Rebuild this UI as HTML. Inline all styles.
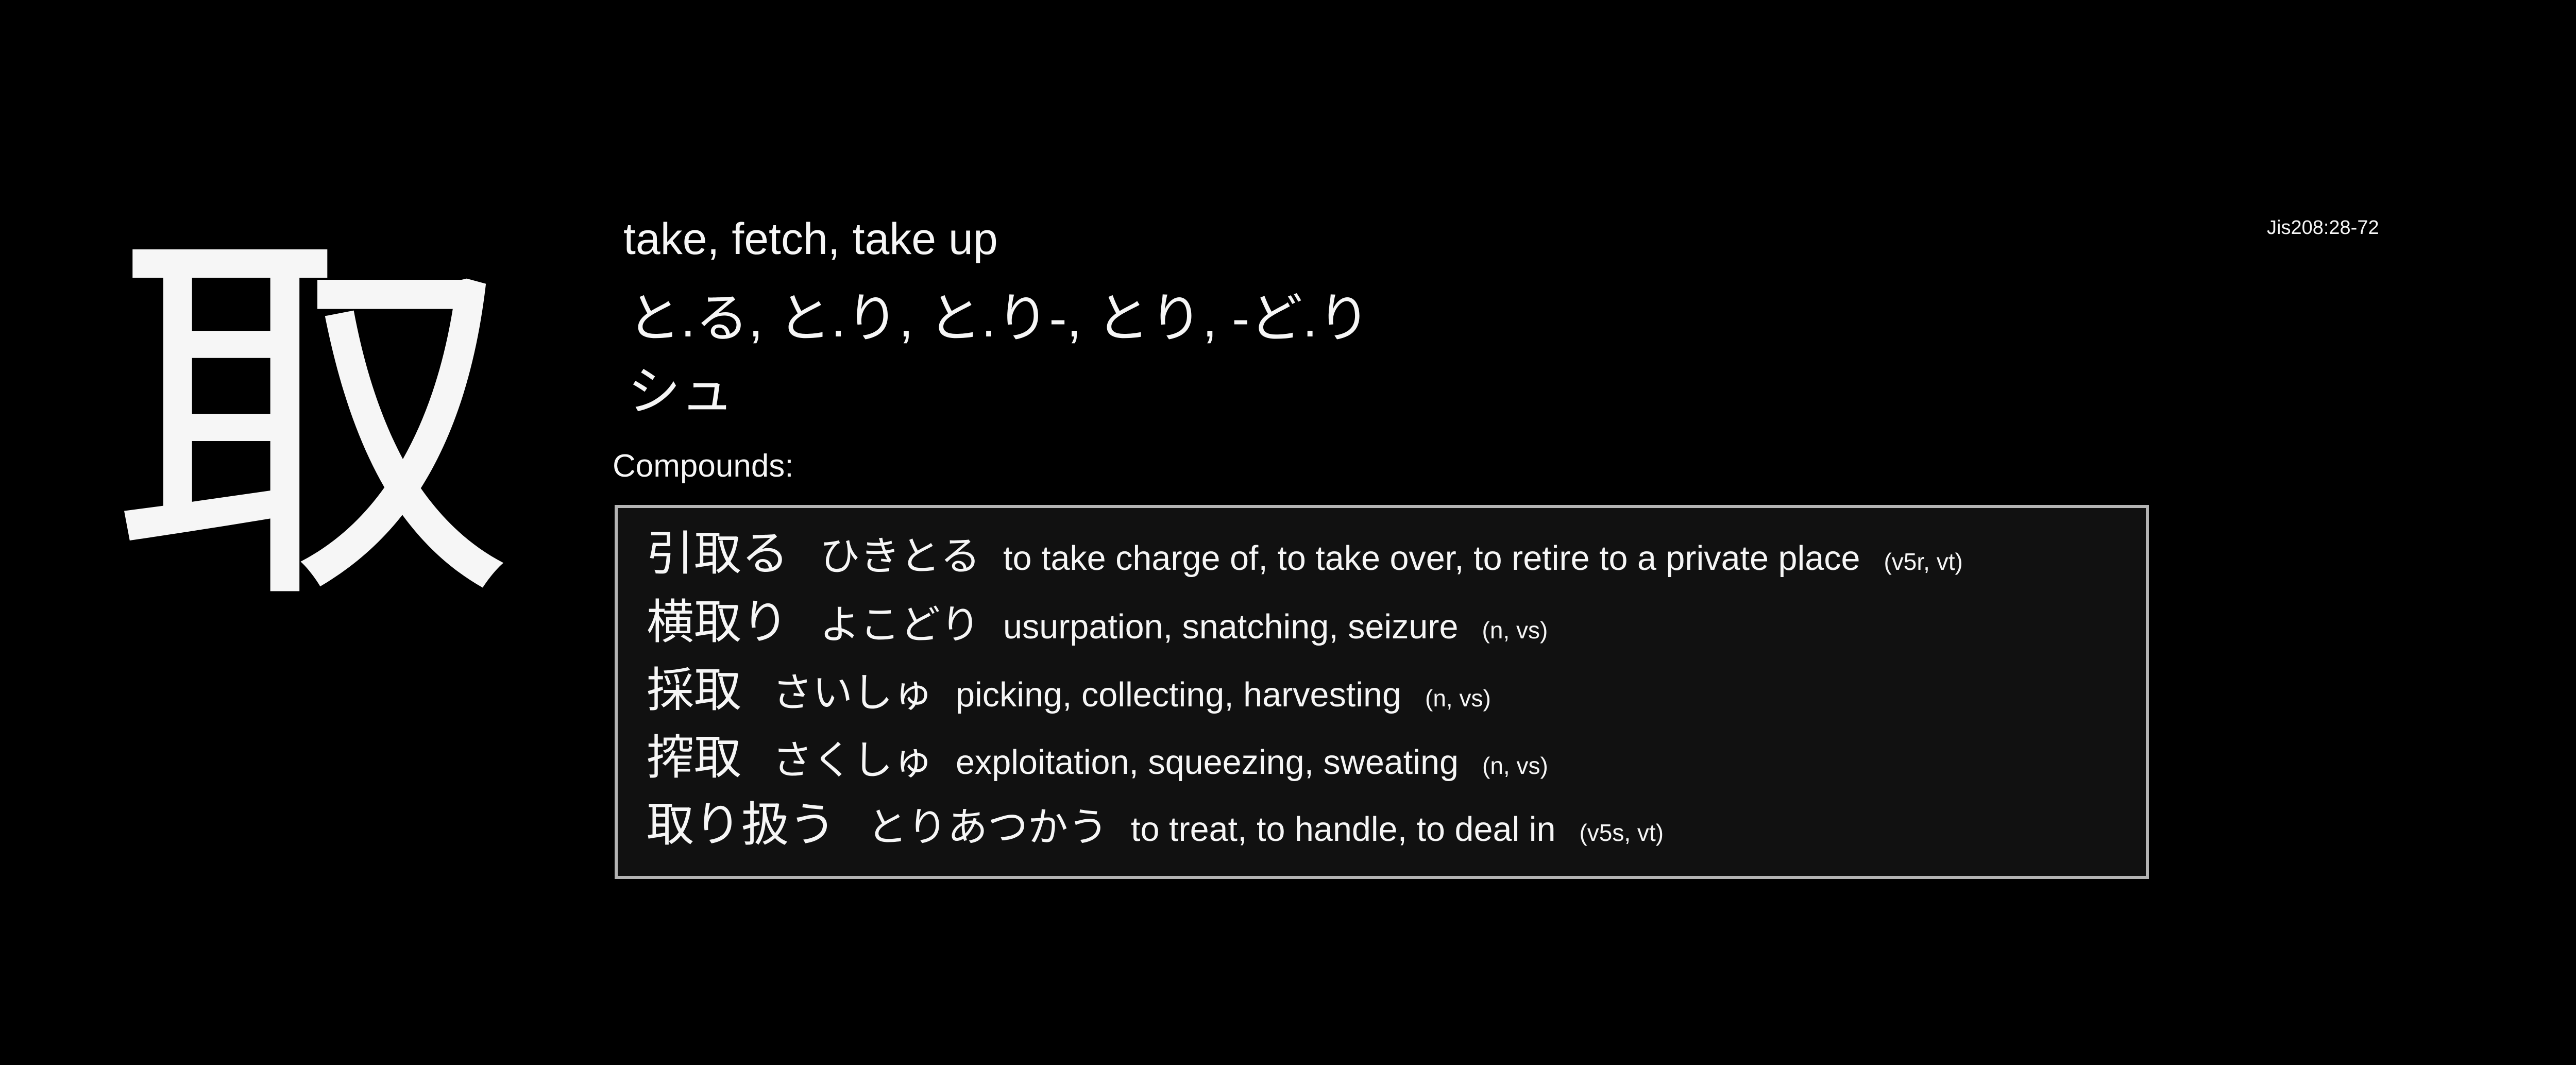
<!DOCTYPE html>
<html><head><meta charset="utf-8"><style>
html,body{margin:0;padding:0;background:#000;}
body{width:5008px;height:2067px;position:relative;overflow:hidden;color:#f6f6f6;font-family:"Liberation Sans","Noto Sans CJK JP",sans-serif;}
.a{position:absolute;white-space:nowrap;line-height:1;}
.box{position:absolute;left:1193px;top:980px;width:2966px;height:714px;border:6px solid #b4b4b4;background:#111;}
.row{position:absolute;left:1255px;font-size:92px;line-height:92px;white-space:nowrap;}
.k{font-size:92px;margin-right:60px;}
.r{font-size:78px;margin-right:44px;}
.d{font-size:66.5px;margin-right:46px;}
.t{font-size:46px;}
</style></head><body>
<div class="a" style="left:220px;top:363px;font-size:775px;font-family:'Noto Sans CJK JP',sans-serif;">取</div>
<div class="a" style="left:1210px;top:421px;font-size:86px;">take, fetch, take up</div>
<div class="a" style="left:1218px;top:566px;font-size:103px;">と.る, と.り, と.り-, とり, -ど.り</div>
<div class="a" style="left:1218px;top:708px;font-size:103px;">シュ</div>
<div class="a" style="left:1189px;top:874px;font-size:62px;">Compounds:</div>
<div class="a" style="left:4400px;top:423px;font-size:38px;">Jis208:28-72</div>
<div class="box"></div>
<div class="row" style="top:1029px"><span class="k">引取る</span><span class="r">ひきとる</span><span class="d">to take charge of, to take over, to retire to a private place</span><span class="t">(v5r, vt)</span></div>
<div class="row" style="top:1162px"><span class="k">横取り</span><span class="r">よこどり</span><span class="d">usurpation, snatching, seizure</span><span class="t">(n, vs)</span></div>
<div class="row" style="top:1294px"><span class="k">採取</span><span class="r">さいしゅ</span><span class="d">picking, collecting, harvesting</span><span class="t">(n, vs)</span></div>
<div class="row" style="top:1425px"><span class="k">搾取</span><span class="r">さくしゅ</span><span class="d">exploitation, squeezing, sweating</span><span class="t">(n, vs)</span></div>
<div class="row" style="top:1555px"><span class="k">取り扱う</span><span class="r">とりあつかう</span><span class="d">to treat, to handle, to deal in</span><span class="t">(v5s, vt)</span></div>
</body></html>
